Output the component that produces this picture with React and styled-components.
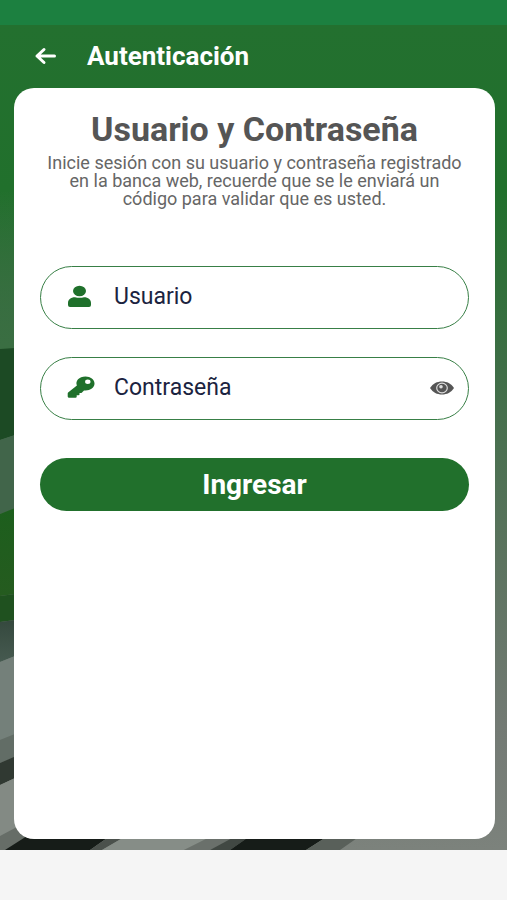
import React, { useState } from "react";
import styled, { createGlobalStyle } from "styled-components";

const GlobalStyle = createGlobalStyle`
  *, *::before, *::after { box-sizing: border-box; }
  body {
    margin: 0;
    background: #f5f5f5;
    font-family: Roboto, "Liberation Sans", sans-serif;
  }
`;

const Screen = styled.div`
  min-height: 100vh;
  display: flex;
  flex-direction: column;
`;

const StatusBar = styled.div`
  height: 25px;
  background: #1c8040;
`;

const Stage = styled.main`
  position: relative;
  isolation: isolate;
  flex: 1;
  display: flex;
  flex-direction: column;
  padding: 0 12px 11px 14px;
`;

const Artwork = styled.svg`
  position: absolute;
  inset: 0;
  z-index: -1;
  width: 100%;
  height: 100%;
`;

const Header = styled.header`
  display: flex;
  align-items: center;
  gap: 30px;
  height: 63px;
  padding: 0 20px 2px;
  color: #fff;
`;

const IconButton = styled.button`
  display: flex;
  padding: 0;
  border: 0;
  background: none;
  color: ${({ $color }) => $color};
  cursor: pointer;
`;

const HeaderTitle = styled.h1`
  margin: 0;
  font-size: 26px;
  line-height: 28px;
  font-weight: 700;
`;

const Card = styled.section`
  flex: 1;
  padding: 22px 26px;
  border-radius: 20px;
  background: #fff;
`;

const CardTitle = styled.h2`
  margin: 0;
  color: #555;
  font-size: 34px;
  line-height: 38px;
  font-weight: 700;
  text-align: center;
`;

const Description = styled.p`
  margin: 6px 0 58px;
  padding: 0 3px;
  color: #666;
  font-size: 18px;
  line-height: 18px;
  text-align: center;
`;

const Form = styled.form`
  display: flex;
  flex-direction: column;
  gap: 28px;
`;

const Field = styled.label`
  display: flex;
  align-items: center;
  height: 63px;
  padding: 0 14px 2px 26px;
  border: 1px solid #387f46;
  border-radius: 32px;
  color: #1f702b;
`;

const Input = styled.input`
  flex: 1;
  min-width: 0;
  margin-left: 19px;
  padding: 0;
  border: 0;
  outline: 0;
  background: none;
  color: #1b2340;
  font: 400 23px/28px Roboto, "Liberation Sans", sans-serif;

  &::placeholder {
    color: #1b2340;
    opacity: 1;
  }
`;

const SubmitButton = styled.button`
  height: 53px;
  margin-top: 10px;
  border: 0;
  border-radius: 32px;
  background: #21702c;
  color: #fff;
  font: 700 28px/28px Roboto, "Liberation Sans", sans-serif;
  cursor: pointer;
`;

const BottomBar = styled.footer`
  height: 50px;
  background: #f5f5f5;
`;

function Backdrop() {
  return (
    <Artwork viewBox="0 25 507 825" preserveAspectRatio="none" aria-hidden="true">
      <defs>
        <linearGradient id="fade" x1="0" y1="0" x2="0" y2="1">
          <stop offset="0" stopColor="#23702f" />
          <stop offset="0.2" stopColor="#21702c" />
          <stop offset="0.42" stopColor="#3f6e47" />
          <stop offset="0.65" stopColor="#5c735f" />
          <stop offset="0.85" stopColor="#737a74" />
          <stop offset="1" stopColor="#7c827c" />
        </linearGradient>
        <linearGradient id="haze" x1="0" y1="0" x2="0" y2="1">
          <stop offset="0" stopColor="#366d3f" stopOpacity="0" />
          <stop offset="1" stopColor="#3a6e42" />
        </linearGradient>
        <linearGradient id="leaf" x1="0" y1="0" x2="0" y2="1">
          <stop offset="0" stopColor="#1c5f1d" />
          <stop offset="1" stopColor="#255b1f" />
        </linearGradient>
        <linearGradient id="slate" x1="0" y1="0" x2="0" y2="1">
          <stop offset="0" stopColor="#34483d" />
          <stop offset="1" stopColor="#465a50" />
        </linearGradient>
      </defs>
      <path d="M0 25H507V850H0Z" fill="url(#fade)" />
      <path d="M0 190H30V347L0 349Z" fill="url(#haze)" />
      <path d="M0 349L30 347V430L0 440Z" fill="#1c4a24" />
      <path d="M0 440L30 430V504L0 514Z" fill="#41654a" />
      <path d="M0 514L30 502V592L0 596Z" fill="url(#leaf)" />
      <path d="M0 596L30 592V618L0 622Z" fill="#1f511f" />
      <path d="M0 622L30 618V650L0 662Z" fill="url(#slate)" />
      <path d="M0 662L30 650V728L0 740Z" fill="#74807a" />
      <path d="M0 740L30 728V751L0 763Z" fill="#626d66" />
      <path d="M0 763L30 750V771L0 785Z" fill="#303932" />
      <path d="M0 785L30 771V850H0Z" fill="#838a84" />
      <path d="M0 836L30 820V850H0Z" fill="#666d67" />
      <path d="M5 850L27 836H110L90 850Z" fill="#161c18" />
      <path d="M90 850L110 836H126L102 850Z" fill="#4b514c" />
      <path d="M102 850L126 836H212L184 850Z" fill="#868d87" />
      <path d="M184 850L212 836H240L210 850Z" fill="#6a706b" />
      <path d="M210 850L236 836H250L230 850Z" fill="#414843" />
      <path d="M230 850L250 836H328L306 850Z" fill="#161c18" />
      <path d="M306 850L328 836H360L340 850Z" fill="#59605a" />
    </Artwork>
  );
}

function BackIcon() {
  return (
    <svg width="23" height="18" viewBox="0 0 23 18" fill="none" stroke="currentColor" strokeWidth="3" strokeLinecap="round" strokeLinejoin="round" aria-hidden="true">
      <path d="M10 2.500L3 9L10 15.500M3 9H20.500" />
    </svg>
  );
}

function UserIcon() {
  return (
    <svg width="28" height="24" viewBox="0 0 28 24" fill="currentColor" aria-hidden="true">
      <ellipse cx="12.5" cy="6" rx="6.5" ry="5.2" />
      <path d="M8 12.3Q12.500 13.300 17 12.300C21.500 12.300 24 15 24 18V20Q24 22 22 22H3Q1 22 1 20V18C1 15 3.500 12.300 8 12.300Z" />
    </svg>
  );
}

function KeyIcon() {
  return (
    <svg width="28" height="24" viewBox="0 0 28 24" fill="currentColor" fillRule="evenodd" aria-hidden="true">
      <path d="M18.500 0.500C23.500 0.500 27.500 3.500 27.500 7.500S23.500 14.500 18.500 14.500L17 14.400L15 16.500Q14.500 17 13.500 17H12.500V18.500Q12.500 19.300 11.500 19.300H9.700V20.700Q9.700 21.700 8.500 21.700H2.200Q0.700 21.700 0.700 20.500V17.500Q0.700 16.800 1.400 16.200L9.900 9.500C8 5 12 0.500 18.500 0.500ZM20.800 3.500A2.700 2.200 0 1 0 20.800 7.900A2.700 2.200 0 1 0 20.800 3.500Z" />
    </svg>
  );
}

function EyeIcon() {
  return (
    <svg width="24" height="14" viewBox="0 0 24 14" aria-hidden="true">
      <path d="M0 7C3 2.500 7 0.500 12 0.500S21 2.500 24 7C21 11.500 17 13.500 12 13.500S3 11.500 0 7Z" fill="#555" />
      <ellipse cx="12" cy="7" rx="5.300" ry="4.800" fill="#555" stroke="#ddd" strokeWidth="1.200" />
      <ellipse cx="11" cy="5.700" rx="1.800" ry="1.700" fill="#ddd" />
    </svg>
  );
}

export default function App() {
  const [visible, setVisible] = useState(false);
  return (
    <Screen>
      <GlobalStyle />
      <StatusBar />
      <Stage>
        <Backdrop />
        <Header>
          <IconButton type="button" $color="#fff" aria-label="Volver">
            <BackIcon />
          </IconButton>
          <HeaderTitle>Autenticación</HeaderTitle>
        </Header>
        <Card>
          <CardTitle>Usuario y Contraseña</CardTitle>
          <Description>
            Inicie sesión con su usuario y contraseña registrado en la banca web, recuerde que se le enviará un código para validar que es usted.
          </Description>
          <Form onSubmit={(event) => event.preventDefault()}>
            <Field>
              <UserIcon />
              <Input type="text" name="user" placeholder="Usuario" aria-label="Usuario" autoComplete="username" />
            </Field>
            <Field>
              <KeyIcon />
              <Input type={visible ? "text" : "password"} name="password" placeholder="Contraseña" aria-label="Contraseña" autoComplete="current-password" />
              <IconButton type="button" $color="#555" aria-label="Mostrar contraseña" onClick={() => setVisible(!visible)}>
                <EyeIcon />
              </IconButton>
            </Field>
            <SubmitButton type="submit">Ingresar</SubmitButton>
          </Form>
        </Card>
      </Stage>
      <BottomBar />
    </Screen>
  );
}
